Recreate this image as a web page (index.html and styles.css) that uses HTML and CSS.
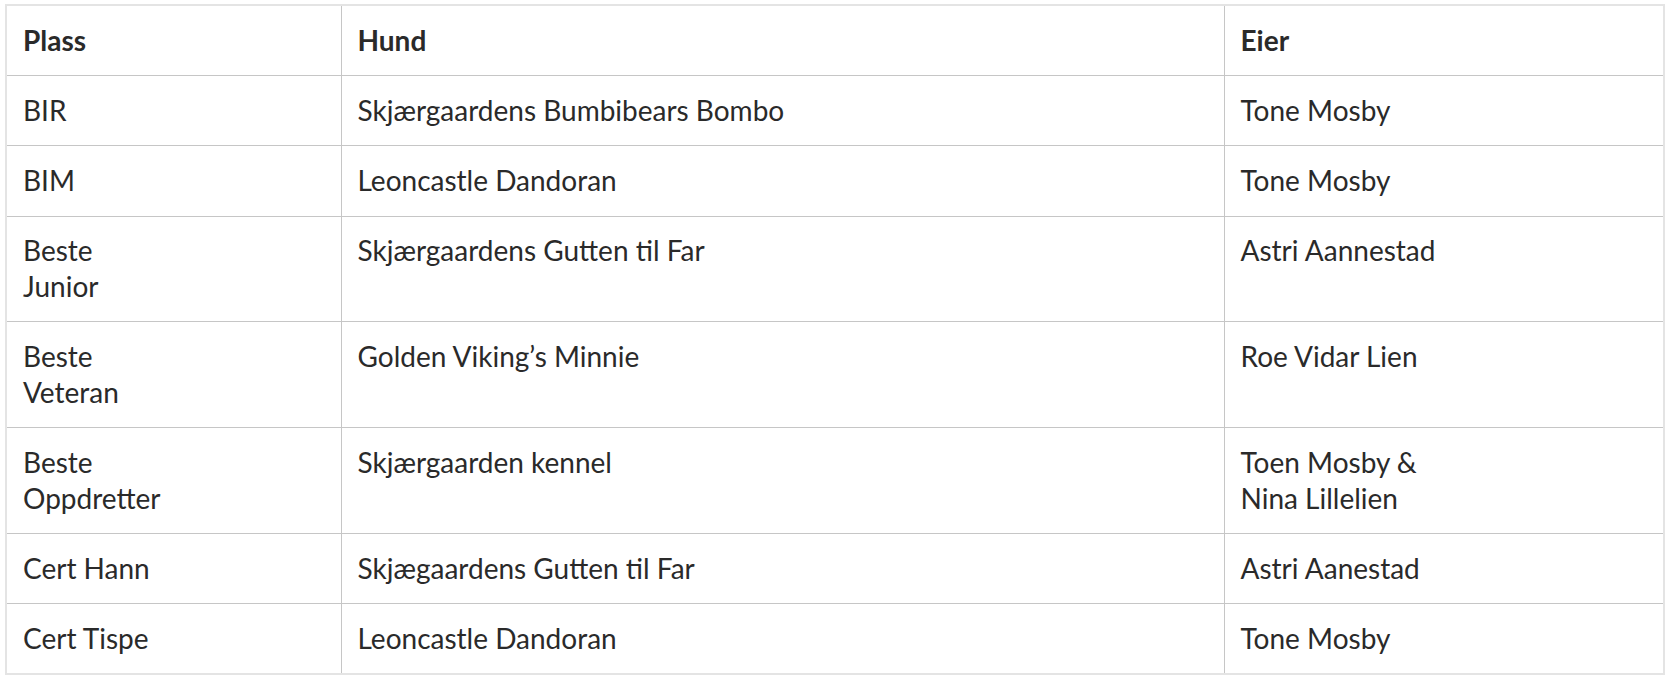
FILE: index.html
```html
<!DOCTYPE html>
<html lang="no">
<head>
<meta charset="utf-8">
<title>Resultater</title>
<link rel="stylesheet" href="styles.css">
</head>
<body>
<table class="results">
  <colgroup>
    <col class="c-plass">
    <col class="c-hund">
    <col class="c-eier">
  </colgroup>
  <thead>
    <tr><th>Plass</th><th>Hund</th><th>Eier</th></tr>
  </thead>
  <tbody>
    <tr><td>BIR</td><td>Skjærgaardens Bumbibears Bombo</td><td>Tone Mosby</td></tr>
    <tr><td>BIM</td><td>Leoncastle Dandoran</td><td>Tone Mosby</td></tr>
    <tr><td>Beste<br>Junior</td><td>Skjærgaardens Gutten til Far</td><td>Astri Aannestad</td></tr>
    <tr><td>Beste<br>Veteran</td><td>Golden Viking’s Minnie</td><td>Roe Vidar Lien</td></tr>
    <tr><td>Beste<br>Oppdretter</td><td>Skjærgaarden kennel</td><td>Toen Mosby &amp;<br>Nina Lillelien</td></tr>
    <tr><td>Cert Hann</td><td>Skjægaardens Gutten til Far</td><td>Astri Aanestad</td></tr>
    <tr><td>Cert Tispe</td><td>Leoncastle Dandoran</td><td>Tone Mosby</td></tr>
  </tbody>
</table>
</body>
</html>
```
FILE: styles.css
```css
html, body {
  margin: 0;
  background: #ffffff;
}
body {
  padding: 4px 5px;
  font-family: Lato, "Open Sans", sans-serif;
  color: #2a2a2a;
}
.results {
  width: 1660px;
  table-layout: fixed;
  border-collapse: collapse;
  border: 2px solid #e4e4e4;
  font-size: 28px;
  line-height: 35.6px;
}
.c-plass { width: 335px; }
.c-hund { width: 883px; }
.c-eier { width: auto; }
.results th,
.results td {
  padding: 16.8px 16px 16.8px 16px;
  border: 1px solid #c6c6c6;
  text-align: left;
  vertical-align: top;
}
.results th {
  font-weight: 700;
}
.results tr:first-child th { border-top: 2px solid #e4e4e4; }
.results tr:last-child td { border-bottom: 2px solid #e4e4e4; }
.results th:first-child, .results td:first-child { border-left: 2px solid #e4e4e4; }
.results th:last-child, .results td:last-child { border-right: 2px solid #e4e4e4; }
```
